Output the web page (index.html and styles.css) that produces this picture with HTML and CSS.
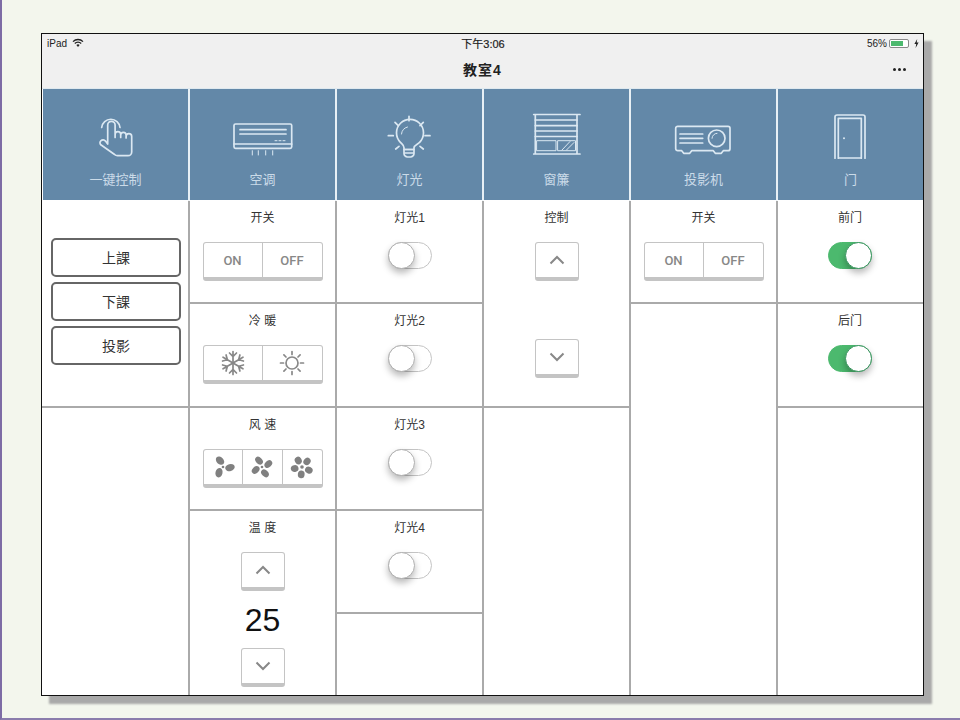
FILE: index.html
```html
<!DOCTYPE html>
<html lang="zh">
  <head>
    <meta charset="UTF-8" />
    <meta name="viewport" content="width=device-width, initial-scale=1.0" />
    <title>教室4</title>
    <link rel="stylesheet" href="styles.css">
  </head>
  <body>
    <div class="frame">
      <div class="status">
        <div class="status-left">
          iPad
          <svg class="wifi" viewBox="0 0 12 10" width="12" height="10">
            <path d="M1 3.6a7 7 0 0 1 10 0M2.8 5.500a4.500 4.500 0 0 1 6.400 0" fill="none" stroke="#222" stroke-width="1.300"/>
            <path d="M4.400 7.100a2.300 2.300 0 0 1 3.200 0L6 8.900z" fill="#222"/>
          </svg>
        </div>
        <div class="status-time">下午3:06</div>
        <div class="status-right">
          56%
          <div class="battery"><div class="battery-level"></div></div>
          <svg viewBox="0 0 5 9" width="5" height="9"><path d="M3.200 0 0.400 5H2.200L1.600 9 4.600 3.600H2.700z" fill="#222"/></svg>
        </div>
      </div>
      <div class="nav">
        <div></div>
        <div class="nav-title">教室4</div>
        <div class="nav-more"><span></span><span></span><span></span></div>
      </div>

      <div class="heads">
        <div class="head">
          <svg class="head-icon" viewBox="0 0 60 46">
            <path d="M15.700 14.500a9.200 9.200 0 0 1 18.300 0"/>
            <path d="M21.700 31V12a3.700 3.700 0 0 1 7.400 0v12.500V21.500a2.800 2.800 0 0 1 5.600 0v3V22a2.700 2.700 0 0 1 5.400 0v3v-1.500a2.800 2.800 0 0 1 5.600 0V39a3.700 3.700 0 0 1-3.700 3.700H31.500a4 4 0 0 1-2.900-1.200L14.800 31.800a2.700 2.700 0 0 1 0-3.900c1.500-1.500 3.500-1.200 4.700.2z"/>
          </svg>
          <div class="head-label">一键控制</div>
        </div>
        <div class="head">
          <svg class="head-icon" viewBox="0 0 60 46">
            <rect x="1" y="11" width="57.700" height="24.300" rx="1.500"/>
            <path d="M1 31H58.700M7 16.700H53M7 21H53"/>
            <path class="thin" d="M42 27.700h2M46 27.700h2M50 27.700h2M19.300 37.700V42M25.300 37.700V42M32.700 37.700V42M39.700 37.700V42"/>
          </svg>
          <div class="head-label">空调</div>
        </div>
        <div class="head">
          <svg class="head-icon" viewBox="0 0 60 46">
            <path d="M24 36.500v-1.800c0-2.500-2-3.500-3.600-5.400a13.500 13.500 0 1 1 19.200 0C38 31.200 34 32.200 34 34.700v1.800z"/>
            <path d="M24 36.500h10v4a3.500 3.500 0 0 1-3.500 3.500h-3a3.500 3.500 0 0 1-3.500-3.500zM24 40h10"/>
            <path class="thin" d="M21.500 21a8 8 0 0 1 6-7"/>
            <path d="M29 3.300V7.700M8.300 22.700H13.300M45 22.700H50M15 9.300 18.300 12.700M43.300 9.300 40 12.700M15.700 36 19 33.300M43.300 36 40 33.300"/>
          </svg>
          <div class="head-label">灯光</div>
        </div>
        <div class="head">
          <svg class="head-icon" viewBox="0 0 60 46">
            <path d="M6.700 1.500H53M6.700 41H53M8.300 1.500V41M50 1.500V41"/>
            <path d="M8.300 7H50M8.300 12.700H50M8.300 18H50M8.300 23.500H50"/>
            <rect class="thin" x="10" y="27.700" width="19" height="10"/>
            <rect class="thin" x="31" y="27.700" width="17.500" height="10"/>
            <path class="thin" d="M35 37 43 28.500M39.500 37 47 29.500"/>
          </svg>
          <div class="head-label">窗簾</div>
        </div>
        <div class="head">
          <svg class="head-icon" viewBox="0 0 60 46">
            <path d="M3.700 13.300H54a2 2 0 0 1 2 2V35.700a2 2 0 0 1-2 2H49.300l-2 2.600H41.300l-2-2.600H17.700l-2 2.600H9.700l-2-2.600H3.700a2 2 0 0 1-2-2V15.300a2 2 0 0 1 2-2z"/>
            <path d="M6 21H28.700M6 25.300H28.700M6 30H28.700"/>
            <circle cx="42.700" cy="25.300" r="8.300"/>
            <path class="thin" d="M38 25.300a5 5 0 0 1 5-5"/>
          </svg>
          <div class="head-label">投影机</div>
        </div>
        <div class="head">
          <svg class="head-icon" viewBox="0 0 60 46">
            <path d="M14 45.300V4a2 2 0 0 1 2-2H42a2 2 0 0 1 2 2V45.300"/>
            <path d="M17.300 45.300V5.300H40.300V45.300M17.300 45H40.300"/>
            <circle class="dot" cx="23" cy="25.300" r="1"/>
          </svg>
          <div class="head-label">门</div>
        </div>
      </div>

      <div class="cols">
        <div class="col">
          <div class="cell cell-double cell-scenes">
            <button class="scene">上課</button>
            <button class="scene">下課</button>
            <button class="scene">投影</button>
          </div>
          <div class="cell-rest"></div>
        </div>

        <div class="col">
          <div class="cell">
            <div class="label">开关</div>
            <div class="btn-group">
              <div class="btn btn-half">ON</div>
              <div class="btn btn-half">OFF</div>
            </div>
          </div>
          <div class="cell">
            <div class="label">冷 暖</div>
            <div class="btn-group">
              <div class="btn btn-half">
                <svg class="glyph" viewBox="0 0 26 26" width="26" height="26">
                  <path d="M13 1.500V24.500M9.500 3 13 6.500 16.500 3M9.500 23 13 19.500 16.500 23"/>
                  <path transform="rotate(60 13 13)" d="M13 1.500V24.500M9.500 3 13 6.500 16.500 3M9.500 23 13 19.500 16.500 23"/>
                  <path transform="rotate(120 13 13)" d="M13 1.500V24.500M9.500 3 13 6.500 16.500 3M9.500 23 13 19.500 16.500 23"/>
                </svg>
              </div>
              <div class="btn btn-half">
                <svg class="glyph" viewBox="0 0 26 26" width="26" height="26">
                  <circle cx="13" cy="13" r="6"/>
                  <path d="M13 1.500V4.500M13 21.500V24.500M1.500 13H4.500M21.500 13H24.500M4.900 4.900 7 7M19 19 21.100 21.100M21.100 4.900 19 7M7 19 4.900 21.100"/>
                </svg>
              </div>
            </div>
          </div>
          <div class="cell">
            <div class="label">风 速</div>
            <div class="btn-group">
              <div class="btn btn-third">
                <svg class="fan" viewBox="0 0 26 26" width="26" height="26">
                  <ellipse cx="13" cy="6" rx="3.500" ry="4.800" transform="rotate(-25 13 13) rotate(-20 13 6)"/>
                  <ellipse cx="13" cy="6" rx="3.500" ry="4.800" transform="rotate(95 13 13) rotate(-20 13 6)"/>
                  <ellipse cx="13" cy="6" rx="3.500" ry="4.800" transform="rotate(215 13 13) rotate(-20 13 6)"/>
                  <circle cx="13" cy="13" r="1.300"/>
                </svg>
              </div>
              <div class="btn btn-third">
                <svg class="fan" viewBox="0 0 26 26" width="26" height="26">
                  <ellipse cx="13" cy="6" rx="3.200" ry="4.400" transform="rotate(-25 13 13) rotate(-20 13 6)"/>
                  <ellipse cx="13" cy="6" rx="3.200" ry="4.400" transform="rotate(65 13 13) rotate(-20 13 6)"/>
                  <ellipse cx="13" cy="6" rx="3.200" ry="4.400" transform="rotate(155 13 13) rotate(-20 13 6)"/>
                  <ellipse cx="13" cy="6" rx="3.200" ry="4.400" transform="rotate(245 13 13) rotate(-20 13 6)"/>
                  <circle cx="13" cy="13" r="1.300"/>
                </svg>
              </div>
              <div class="btn btn-third">
                <svg class="fan" viewBox="0 0 26 26" width="26" height="26">
                  <ellipse cx="13" cy="5.500" rx="3.400" ry="3.900" transform="rotate(-30 13 13)"/>
                  <ellipse cx="13" cy="5.500" rx="3.400" ry="3.900" transform="rotate(42 13 13)"/>
                  <ellipse cx="13" cy="5.500" rx="3.400" ry="3.900" transform="rotate(114 13 13)"/>
                  <ellipse cx="13" cy="5.500" rx="3.400" ry="3.900" transform="rotate(186 13 13)"/>
                  <ellipse cx="13" cy="5.500" rx="3.400" ry="3.900" transform="rotate(258 13 13)"/>
                  <circle cx="13" cy="13" r="1.800"/>
                </svg>
              </div>
            </div>
          </div>
          <div class="cell-rest">
            <div class="label">温 度</div>
            <div class="btn btn-square">
              <svg class="chevron" viewBox="0 0 16 10" width="16" height="10"><path d="M1.500 8.500 8 2l6.500 6.500"/></svg>
            </div>
            <div class="temp">25</div>
            <div class="btn btn-square">
              <svg class="chevron" viewBox="0 0 16 10" width="16" height="10"><path d="M1.500 1.500 8 8l6.500-6.500"/></svg>
            </div>
          </div>
        </div>

        <div class="col">
          <div class="cell">
            <div class="label">灯光1</div>
            <div class="toggle"><div class="knob"></div></div>
          </div>
          <div class="cell">
            <div class="label">灯光2</div>
            <div class="toggle"><div class="knob"></div></div>
          </div>
          <div class="cell">
            <div class="label">灯光3</div>
            <div class="toggle"><div class="knob"></div></div>
          </div>
          <div class="cell">
            <div class="label">灯光4</div>
            <div class="toggle"><div class="knob"></div></div>
          </div>
          <div class="cell-rest"></div>
        </div>

        <div class="col">
          <div class="cell cell-double">
            <div class="label">控制</div>
            <div class="btn btn-square">
              <svg class="chevron" viewBox="0 0 16 10" width="16" height="10"><path d="M1.500 8.500 8 2l6.500 6.500"/></svg>
            </div>
            <div class="blind-gap"></div>
            <div class="btn btn-square">
              <svg class="chevron" viewBox="0 0 16 10" width="16" height="10"><path d="M1.500 1.500 8 8l6.500-6.500"/></svg>
            </div>
          </div>
          <div class="cell-rest"></div>
        </div>

        <div class="col">
          <div class="cell">
            <div class="label">开关</div>
            <div class="btn-group">
              <div class="btn btn-half">ON</div>
              <div class="btn btn-half">OFF</div>
            </div>
          </div>
          <div class="cell-rest"></div>
        </div>

        <div class="col">
          <div class="cell cell-door">
            <div class="label">前门</div>
            <div class="toggle toggle-on"><div class="knob"></div></div>
          </div>
          <div class="cell cell-door">
            <div class="label">后门</div>
            <div class="toggle toggle-on"><div class="knob"></div></div>
          </div>
          <div class="cell-rest"></div>
        </div>
      </div>
    </div>
  </body>
</html>
```

FILE: styles.css
```css
* {
  box-sizing: border-box;
}

body {
  margin: 0;
  height: 720px;
  padding: 33px 0 0 39px;
  overflow: hidden;
  background-color: #f3f6ed;
  border-left: 2px solid #7d6ca5;
  border-bottom: 2px solid #8a7cac;
  font-family: "Liberation Sans", "Noto Sans CJK SC", sans-serif;
  color: #222;
}

.frame {
  width: 883px;
  height: 663px;
  border: 1px solid #111;
  background-color: #fff;
  box-shadow: 8px 8px 2px #a9a9a9;
  overflow: hidden;
}

.status {
  display: grid;
  grid-template-columns: 1fr auto 1fr;
  align-items: center;
  height: 18px;
  padding: 0 4px 0 5px;
  background-color: #f0f0f0;
  font-size: 10px;
}

.status-left,
.status-right {
  display: flex;
  align-items: center;
  gap: 5px;
}

.status-right {
  justify-content: flex-end;
  gap: 2px;
}

.status-time {
  font-size: 11px;
  -webkit-text-stroke: 0.2px #222;
}

.battery {
  width: 20px;
  height: 9px;
  margin-right: 3px;
  padding: 1px;
  border: 1px solid #888;
  border-radius: 2px;
  background-color: #fff;
}

.battery-level {
  width: 72%;
  height: 100%;
  background-color: #4cb96e;
}

.nav {
  display: grid;
  grid-template-columns: 1fr auto 1fr;
  align-items: center;
  height: 36px;
  padding: 0 17px 2px;
  background-color: #f0f0f0;
}

.nav-title {
  font-size: 14px;
  font-weight: bold;
  letter-spacing: 1px;
}

.nav-more {
  display: flex;
  justify-content: flex-end;
  gap: 2px;
}

.nav-more span {
  width: 3px;
  height: 3px;
  border-radius: 50%;
  background-color: #222;
}

.heads,
.cols {
  display: grid;
  grid-template-columns: 146px repeat(5, 147px);
}

.heads {
  height: 113px;
  border-top: 1px solid #dfe9ef;
}

.head {
  display: flex;
  flex-direction: column;
  align-items: center;
  padding-top: 24px;
  background-color: #6388a8;
  border-left: 2px solid #e8f0f5;
  border-bottom: 1px solid #fff;
}

.head:first-child {
  border-left: 1px solid #fff;
}

.head-icon {
  width: 60px;
  height: 46px;
  fill: none;
  stroke: #dbe8f2;
  stroke-width: 1.700;
  stroke-linecap: round;
  stroke-linejoin: round;
}

.head-icon .thin {
  stroke-width: 1;
}

.head-icon .dot {
  fill: #dbe8f2;
  stroke: none;
}

.head-label {
  margin-top: 13px;
  font-size: 13px;
  line-height: 16px;
  color: #cbdbe8;
}

.cols {
  height: 494px;
}

.col {
  display: flex;
  flex-direction: column;
  border-left: 2px solid #aaa;
}

.col:first-child {
  border-left: none;
}

.cell {
  display: flex;
  flex-direction: column;
  align-items: center;
  height: 103.300px;
  padding-top: 9px;
  border-bottom: 2px solid #aaa;
}

.cell-double {
  height: 206.600px;
}

.cell-scenes {
  gap: 5px;
  padding: 37px 0 0 2px;
}

.cell-door {
  padding-right: 1px;
}

.cell-rest {
  display: flex;
  flex-direction: column;
  align-items: center;
  flex: 1;
  padding-top: 9px;
}

.label {
  height: 17px;
  margin-bottom: 15px;
  font-size: 12px;
  line-height: 17px;
  color: #333;
}

.scene {
  width: 130px;
  height: 39px;
  padding: 0 0 2px;
  border: 2px solid #666;
  border-radius: 5px;
  background-color: #fff;
  font-family: inherit;
  font-size: 14px;
  color: #333;
}

.btn-group {
  display: flex;
}

.btn {
  display: flex;
  align-items: center;
  justify-content: center;
  height: 39px;
  border: 1px solid #c4c4c4;
  border-bottom-width: 4px;
  background-color: #fff;
  font-family: Roboto, sans-serif;
  font-size: 13px;
  font-weight: 500;
  color: #888;
}

.btn-group .btn + .btn {
  border-left: none;
}

.btn-group .btn:first-child {
  border-radius: 3px 0 0 3px;
}

.btn-group .btn:last-child {
  border-radius: 0 3px 3px 0;
}

.btn-half {
  width: 60px;
}

.btn-third {
  width: 40px;
}

.btn-square {
  width: 44px;
  border-radius: 3px;
}

.glyph {
  fill: none;
  stroke: #888;
  stroke-width: 1.700;
  stroke-linecap: round;
}

.fan {
  fill: #808080;
}

.chevron {
  fill: none;
  stroke: #888;
  stroke-width: 2;
}

.temp {
  height: 57px;
  font-size: 32px;
  line-height: 58px;
  color: #111;
}

.blind-gap {
  height: 58px;
}

.toggle {
  display: flex;
  width: 44px;
  height: 27px;
  border: 1px solid #c4c4c4;
  border-radius: 14px;
  background-color: #fff;
}

.knob {
  width: 27px;
  height: 27px;
  margin: -1px;
  border: 1px solid #b0b0b0;
  border-radius: 50%;
  background-color: #fff;
  box-shadow: 0 4px 7px rgba(0, 0, 0, 0.28);
}

.toggle-on {
  justify-content: flex-end;
  border-color: #4cb96e;
  background-color: #4cb96e;
}

.toggle-on .knob {
  border-color: #3a9560;
}
```
